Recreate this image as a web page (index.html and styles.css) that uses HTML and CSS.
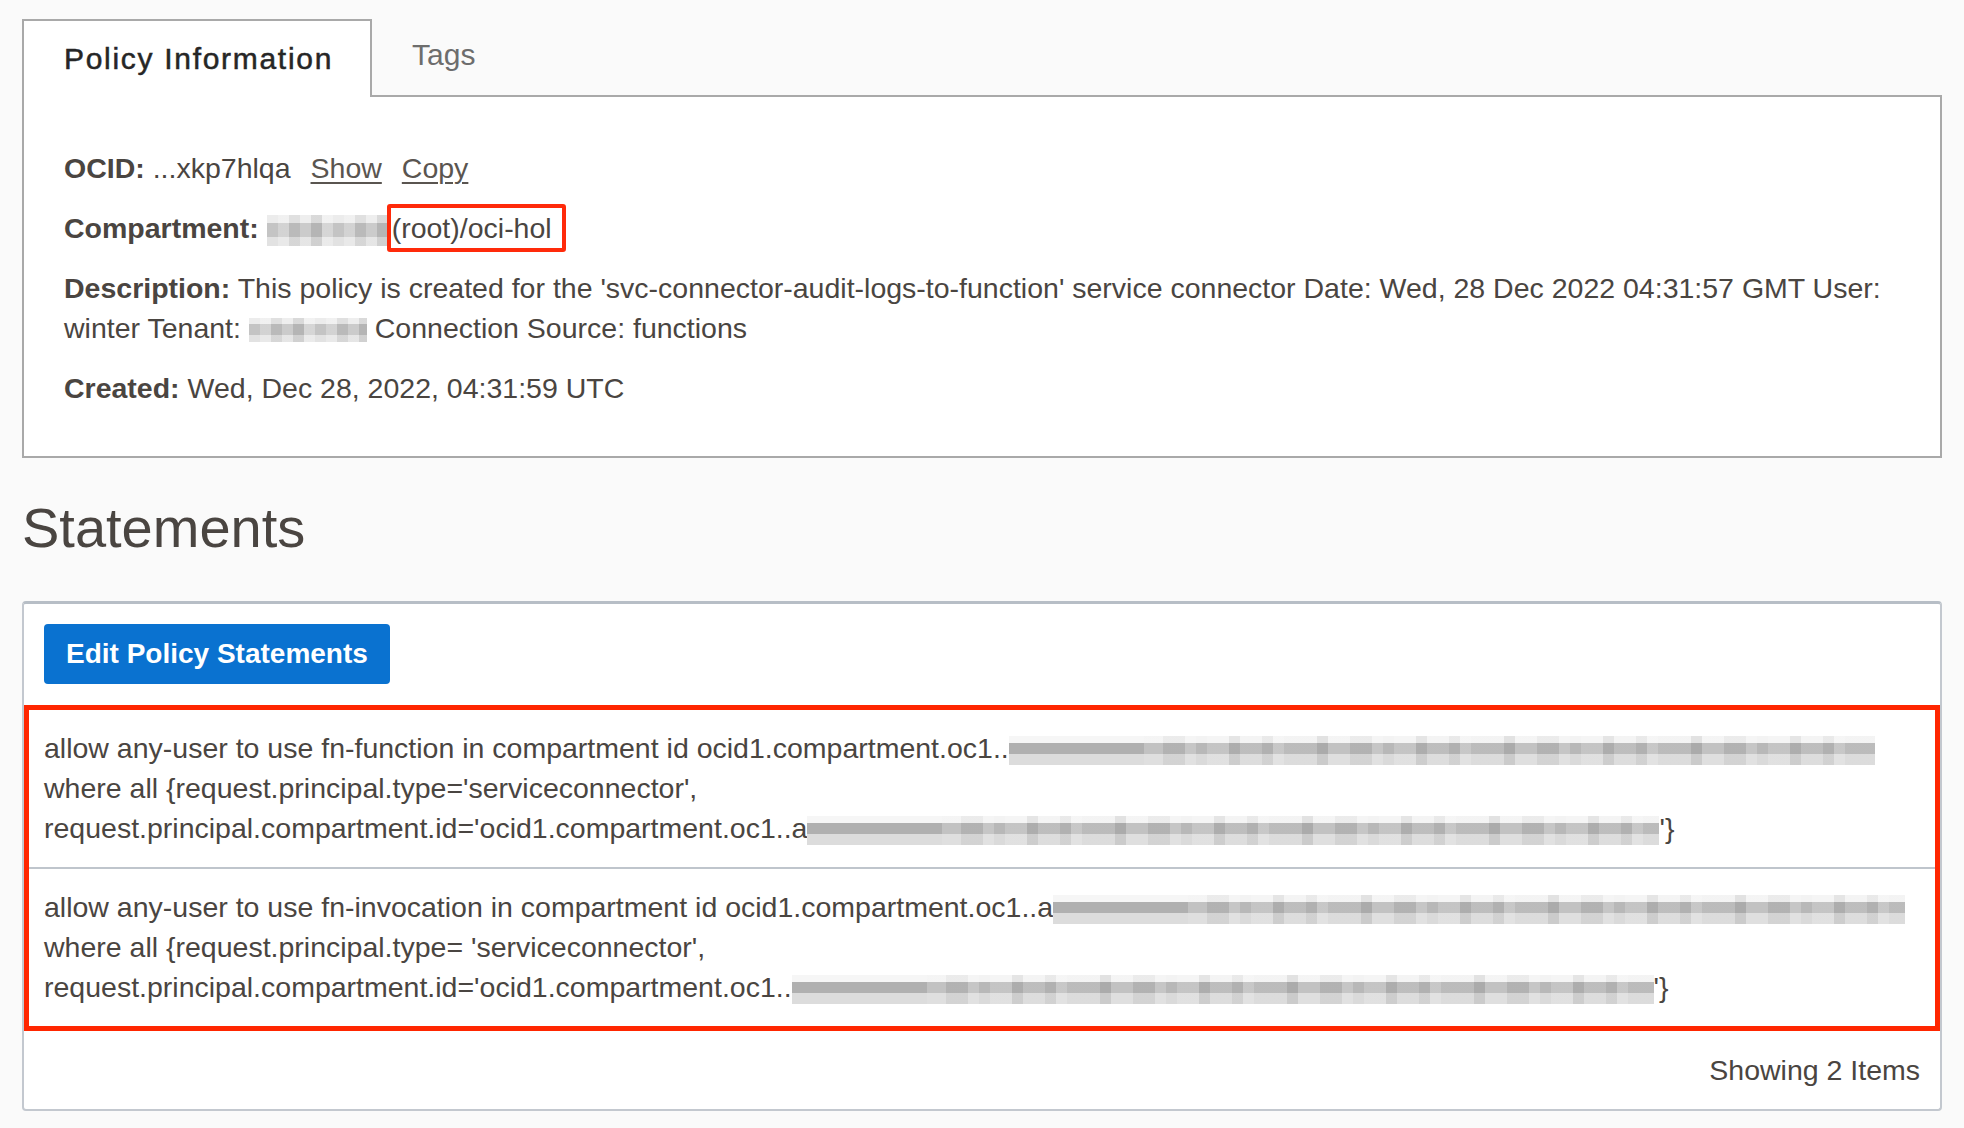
FILE: index.html
```html
<!DOCTYPE html>
<html lang="en">
<head>
<meta charset="utf-8">
<title>Policy Details</title>
<link rel="stylesheet" href="styles.css">
</head>
<body>
<div class="page">
  <div class="tabs">
    <div class="tab tab-active">Policy Information</div>
    <div class="tab tab-idle">Tags</div>
    <div class="tab-fill"></div>
  </div>
  <div class="info-panel">
    <div class="info-row"><span class="label">OCID:</span> <span>...xkp7hlqa</span><a class="link">Show</a><a class="link">Copy</a></div>
    <div class="info-row"><span class="label">Compartment:</span> <span class="blur blur-soft blur-comp"></span><span class="highlight-inline">(root)/oci-hol</span></div>
    <div class="info-row"><span class="label">Description:</span> This policy is created for the 'svc-connector-audit-logs-to-function' service connector Date: Wed, 28 Dec 2022 04:31:57 GMT User: winter Tenant: <span class="blur blur-soft blur-tenant"></span> Connection Source: functions</div>
    <div class="info-row"><span class="label">Created:</span> Wed, Dec 28, 2022, 04:31:59 UTC</div>
  </div>

  <h1 class="section-title">Statements</h1>

  <div class="card">
    <div class="toolbar">
      <button class="btn-primary" type="button">Edit Policy Statements</button>
    </div>
    <div class="statement-list">
      <div class="statement">allow any-user to use fn-function in compartment id ocid1.compartment.oc1..<span class="blur blur-r1a"></span><br>where all {request.principal.type='serviceconnector',<br>request.principal.compartment.id='ocid1.compartment.oc1..a<span class="blur blur-r1c"></span>'}</div>
      <div class="statement">allow any-user to use fn-invocation in compartment id ocid1.compartment.oc1..a<span class="blur blur-r2a"></span><br>where all {request.principal.type= 'serviceconnector',<br>request.principal.compartment.id='ocid1.compartment.oc1..<span class="blur blur-r2c"></span>'}</div>
    </div>
    <div class="card-footer">Showing 2 Items</div>
  </div>
</div>
</body>
</html>
```

FILE: styles.css
```css
html, body {
  margin: 0;
  padding: 0;
  background: #fafafa;
}

body {
  font-family: "Liberation Sans", Arial, Helvetica, sans-serif;
  font-size: 28.5px;
  color: #4a4541;
}

.page {
  padding: 19px 22px 0 22px;
}

/* Tabs */
.tabs {
  display: flex;
  height: 78px;
}

.tab {
  box-sizing: border-box;
  height: 78px;
  font-size: 30px;
}

.tab-active {
  padding: 0 37px 0 40px;
  line-height: 76px;
  border: 2px solid #a9a9a9;
  border-bottom: none;
  background: #ffffff;
  color: #262626;
  letter-spacing: 1.7px;
  -webkit-text-stroke: 0.5px #262626;
}

.tab-idle {
  padding: 0 40px 0 40px;
  line-height: 72px;
  color: #6d6d6d;
  border-bottom: 2px solid #a9a9a9;
}

.tab-fill {
  flex: 1;
  border-bottom: 2px solid #a9a9a9;
}

/* Info panel */
.info-panel {
  background: #ffffff;
  border: 2px solid #a9a9a9;
  border-top: none;
  padding: 51px 40px 48px 40px;
}

.info-row {
  line-height: 40px;
  margin-bottom: 20px;
}

.info-row:last-child {
  margin-bottom: 0;
}

.label {
  font-weight: bold;
}

.link {
  margin-left: 20px;
  color: #5a5550;
  text-decoration: underline;
  text-underline-offset: 4px;
  text-decoration-thickness: 1.5px;
}

.highlight-inline {
  display: inline-block;
  line-height: 40px;
  margin: -4px 0;
  padding: 0 10px 0 1px;
  border: 4px solid #ff2a0a;
  border-radius: 3px;
}

/* pixelated redaction blocks */
.blur {
  display: inline-block;
  vertical-align: middle;
  height: 29px;
  background-color: #d8d8d8;
  background-image:
    linear-gradient(to bottom, #f6f6f6 0 24%, #b0b0b0 24% 62%, #dcdcdc 62% 100%),
    repeating-linear-gradient(90deg,
      rgba(255,255,255,0) 0 11px,
      rgba(255,255,255,.18) 11px 33px,
      rgba(0,0,0,.06) 33px 44px,
      rgba(255,255,255,.08) 44px 66px,
      rgba(0,0,0,.04) 66px 77px,
      rgba(255,255,255,.22) 77px 88px,
      rgba(255,255,255,.05) 88px 121px,
      rgba(0,0,0,.07) 121px 132px,
      rgba(255,255,255,.14) 132px 154px,
      rgba(0,0,0,.03) 154px 176px,
      rgba(255,255,255,.2) 176px 187px),
    linear-gradient(to bottom, #f3f3f3 0 24%, #b8b8b8 24% 62%, #dadada 62% 100%);
  background-size: 135px 100%, 100% 100%, 100% 100%;
  background-repeat: no-repeat;
}

.blur-soft {
  background-image:
    repeating-linear-gradient(90deg,
      rgba(255,255,255,0) 0 11px,
      rgba(255,255,255,.25) 11px 22px,
      rgba(0,0,0,.05) 22px 33px,
      rgba(255,255,255,.12) 33px 44px,
      rgba(0,0,0,.08) 44px 55px,
      rgba(255,255,255,.3) 55px 66px),
    linear-gradient(to bottom, #ececec 0 25%, #c4c4c4 25% 70%, #e2e2e2 70% 100%);
  background-size: 100% 100%, 100% 100%;
}

.blur-comp {
  width: 120px;
  height: 31px;
}

.blur-tenant {
  width: 118px;
  height: 24px;
}

.blur-r1a { width: 866px; }
.blur-r1c { width: 852px; }
.blur-r2a { width: 852px; }
.blur-r2c { width: 862px; }

/* Statements */
.section-title {
  margin: 42px 0 45px 0;
  font-size: 56px;
  line-height: 56px;
  font-weight: normal;
  color: #4a4541;
}

.card {
  background: #ffffff;
  border: 2px solid #c3c8cf;
  border-top: 3px solid #b7bec6;
  border-radius: 4px;
}

.toolbar {
  padding: 20px 20px 21px 20px;
}

.btn-primary {
  display: inline-block;
  height: 60px;
  padding: 0 22px;
  border: none;
  border-radius: 4px;
  background: #0a72d0;
  color: #ffffff;
  font-family: "Liberation Sans", Arial, Helvetica, sans-serif;
  font-size: 28px;
  font-weight: bold;
  line-height: 60px;
}

.statement-list {
  border: 5px solid #ff2600;
}

.statement {
  padding: 18px 15px 19px 15px;
  line-height: 40px;
  white-space: nowrap;
}

.statement + .statement {
  border-top: 2px solid #bfc5cc;
}

.card-footer {
  padding: 19px 20px;
  line-height: 40px;
  text-align: right;
}
```
